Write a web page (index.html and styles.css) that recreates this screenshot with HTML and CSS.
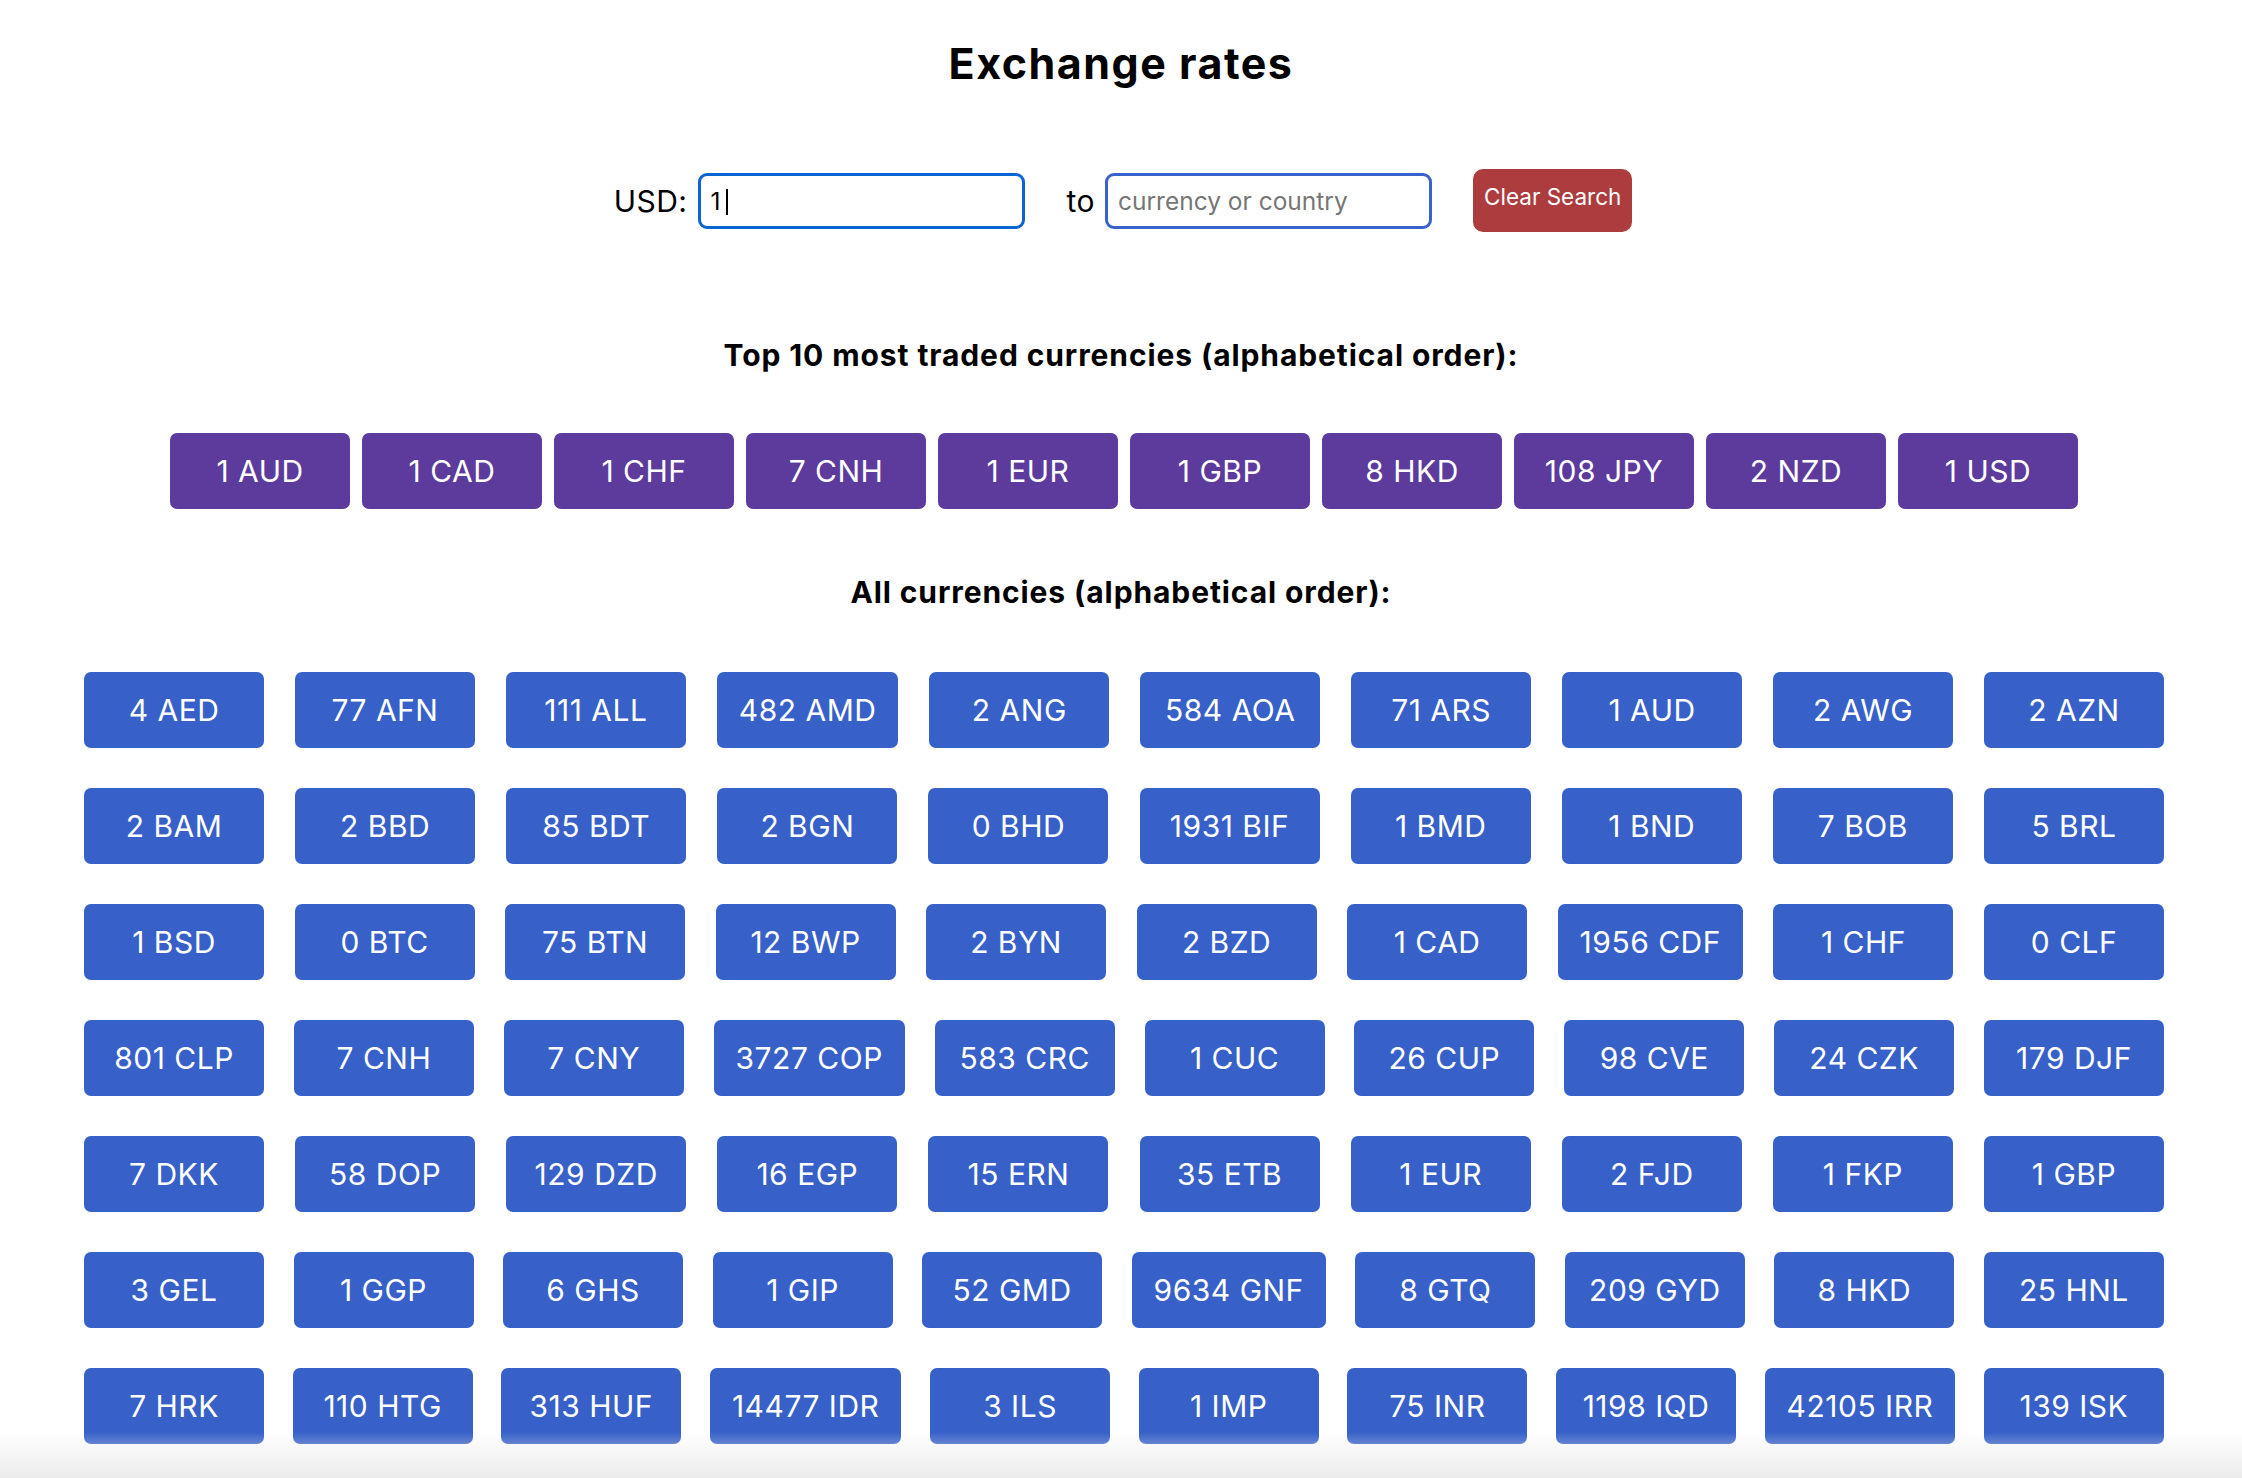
FILE: index.html
```html
<!DOCTYPE html>
<html lang="en">
<head>
<meta charset="utf-8">
<title>Exchange rates</title>
<link rel="stylesheet" href="styles.css">
</head>
<body>
<h1 class="title">Exchange rates</h1>
<div class="search">
  <span class="label">USD:</span>
  <span class="field-wrap">
    <input class="field field--active" type="text" value="1">
    <span class="caret"></span>
  </span>
  <span class="label label--to">to</span>
  <span class="field-wrap">
    <input class="field" type="text" placeholder="currency or country">
  </span>
  <button class="clear" type="button">Clear Search</button>
</div>
<h2 class="heading heading--top">Top 10 most traded currencies (alphabetical order):</h2>
<div class="top-list">
  <button class="chip chip--top">1 AUD</button>
  <button class="chip chip--top">1 CAD</button>
  <button class="chip chip--top">1 CHF</button>
  <button class="chip chip--top">7 CNH</button>
  <button class="chip chip--top">1 EUR</button>
  <button class="chip chip--top">1 GBP</button>
  <button class="chip chip--top">8 HKD</button>
  <button class="chip chip--top">108 JPY</button>
  <button class="chip chip--top">2 NZD</button>
  <button class="chip chip--top">1 USD</button>
</div>
<h2 class="heading heading--all">All currencies (alphabetical order):</h2>
<div class="all-list">
  <button class="chip chip--all">4 AED</button>
  <button class="chip chip--all">77 AFN</button>
  <button class="chip chip--all">111 ALL</button>
  <button class="chip chip--all">482 AMD</button>
  <button class="chip chip--all">2 ANG</button>
  <button class="chip chip--all">584 AOA</button>
  <button class="chip chip--all">71 ARS</button>
  <button class="chip chip--all">1 AUD</button>
  <button class="chip chip--all">2 AWG</button>
  <button class="chip chip--all">2 AZN</button>
  <button class="chip chip--all">2 BAM</button>
  <button class="chip chip--all">2 BBD</button>
  <button class="chip chip--all">85 BDT</button>
  <button class="chip chip--all">2 BGN</button>
  <button class="chip chip--all">0 BHD</button>
  <button class="chip chip--all">1931 BIF</button>
  <button class="chip chip--all">1 BMD</button>
  <button class="chip chip--all">1 BND</button>
  <button class="chip chip--all">7 BOB</button>
  <button class="chip chip--all">5 BRL</button>
  <button class="chip chip--all">1 BSD</button>
  <button class="chip chip--all">0 BTC</button>
  <button class="chip chip--all">75 BTN</button>
  <button class="chip chip--all">12 BWP</button>
  <button class="chip chip--all">2 BYN</button>
  <button class="chip chip--all">2 BZD</button>
  <button class="chip chip--all">1 CAD</button>
  <button class="chip chip--all">1956 CDF</button>
  <button class="chip chip--all">1 CHF</button>
  <button class="chip chip--all">0 CLF</button>
  <button class="chip chip--all">801 CLP</button>
  <button class="chip chip--all">7 CNH</button>
  <button class="chip chip--all">7 CNY</button>
  <button class="chip chip--all">3727 COP</button>
  <button class="chip chip--all">583 CRC</button>
  <button class="chip chip--all">1 CUC</button>
  <button class="chip chip--all">26 CUP</button>
  <button class="chip chip--all">98 CVE</button>
  <button class="chip chip--all">24 CZK</button>
  <button class="chip chip--all">179 DJF</button>
  <button class="chip chip--all">7 DKK</button>
  <button class="chip chip--all">58 DOP</button>
  <button class="chip chip--all">129 DZD</button>
  <button class="chip chip--all">16 EGP</button>
  <button class="chip chip--all">15 ERN</button>
  <button class="chip chip--all">35 ETB</button>
  <button class="chip chip--all">1 EUR</button>
  <button class="chip chip--all">2 FJD</button>
  <button class="chip chip--all">1 FKP</button>
  <button class="chip chip--all">1 GBP</button>
  <button class="chip chip--all">3 GEL</button>
  <button class="chip chip--all">1 GGP</button>
  <button class="chip chip--all">6 GHS</button>
  <button class="chip chip--all">1 GIP</button>
  <button class="chip chip--all">52 GMD</button>
  <button class="chip chip--all">9634 GNF</button>
  <button class="chip chip--all">8 GTQ</button>
  <button class="chip chip--all">209 GYD</button>
  <button class="chip chip--all">8 HKD</button>
  <button class="chip chip--all">25 HNL</button>
  <button class="chip chip--all">7 HRK</button>
  <button class="chip chip--all">110 HTG</button>
  <button class="chip chip--all">313 HUF</button>
  <button class="chip chip--all">14477 IDR</button>
  <button class="chip chip--all">3 ILS</button>
  <button class="chip chip--all">1 IMP</button>
  <button class="chip chip--all">75 INR</button>
  <button class="chip chip--all">1198 IQD</button>
  <button class="chip chip--all">42105 IRR</button>
  <button class="chip chip--all">139 ISK</button>
</div>
<div class="fade"></div>
</body>
</html>
```

FILE: styles.css
```css
html, body {
  margin: 0;
  padding: 0;
  background: #ffffff;
}

body {
  font-family: Inter, "Noto Sans", sans-serif;
  color: #000000;
}

.title {
  margin: 0;
  padding-top: 37px;
  text-align: center;
  font-size: 43px;
  line-height: 52px;
  font-weight: 700;
  letter-spacing: 1.5px;
}

.search {
  display: flex;
  justify-content: center;
  align-items: center;
  margin-top: 80px;
  height: 63px;
  padding-left: 4px;
}

.label {
  font-size: 30px;
  letter-spacing: 0.5px;
}

.label--to {
  margin-left: 42px;
}

.field-wrap {
  position: relative;
  display: block;
  margin-left: 10px;
}

.field {
  display: block;
  width: 327px;
  height: 56px;
  box-sizing: border-box;
  margin: 0;
  padding: 0 10px;
  border: 3px solid #3a62cc;
  border-radius: 9px;
  outline: none;
  font-family: Inter, "Noto Sans", sans-serif;
  font-size: 24.5px;
  color: #000000;
  background: #ffffff;
}

.field::placeholder {
  color: #767676;
}

.field--active {
  border-color: #0a64d4;
}

.caret {
  position: absolute;
  left: 28px;
  top: 16px;
  width: 2px;
  height: 26px;
  background: #000000;
}

.clear {
  margin-left: 41px;
  height: 63px;
  padding: 0 11px 8px;
  background: #ad3c3e;
  color: #ffffff;
  border: 0;
  border-radius: 10px;
  font-family: Inter, "Noto Sans", sans-serif;
  font-size: 22.5px;
}

.heading {
  margin: 0;
  text-align: center;
  font-size: 30px;
  line-height: 36px;
  font-weight: 700;
  letter-spacing: 0.9px;
}

.heading--top {
  margin-top: 105px;
}

.heading--all {
  margin-top: 65px;
}

.top-list {
  display: flex;
  justify-content: center;
  gap: 12px;
  margin-top: 60px;
  padding-left: 6px;
}

.all-list {
  display: flex;
  flex-wrap: wrap;
  justify-content: space-between;
  row-gap: 40px;
  margin-top: 62px;
  padding: 0 68px 0 74px;
}

.chip {
  min-width: 180px;
  height: 76px;
  box-sizing: border-box;
  padding: 0 22px;
  border: 0;
  border-radius: 7px;
  color: #ffffff;
  font-family: Inter, "Noto Sans", sans-serif;
  font-size: 30px;
  font-weight: 400;
  letter-spacing: 0.5px;
  display: flex;
  align-items: center;
  justify-content: center;
}

.chip--top {
  background: #5c3b9d;
}

.chip--all {
  background: #3761c8;
  margin: 0 10px;
}

.fade {
  position: fixed;
  left: 0;
  right: 0;
  bottom: 0;
  height: 46px;
  background: linear-gradient(rgba(236, 236, 236, 0), #ebebeb);
  pointer-events: none;
}
```
